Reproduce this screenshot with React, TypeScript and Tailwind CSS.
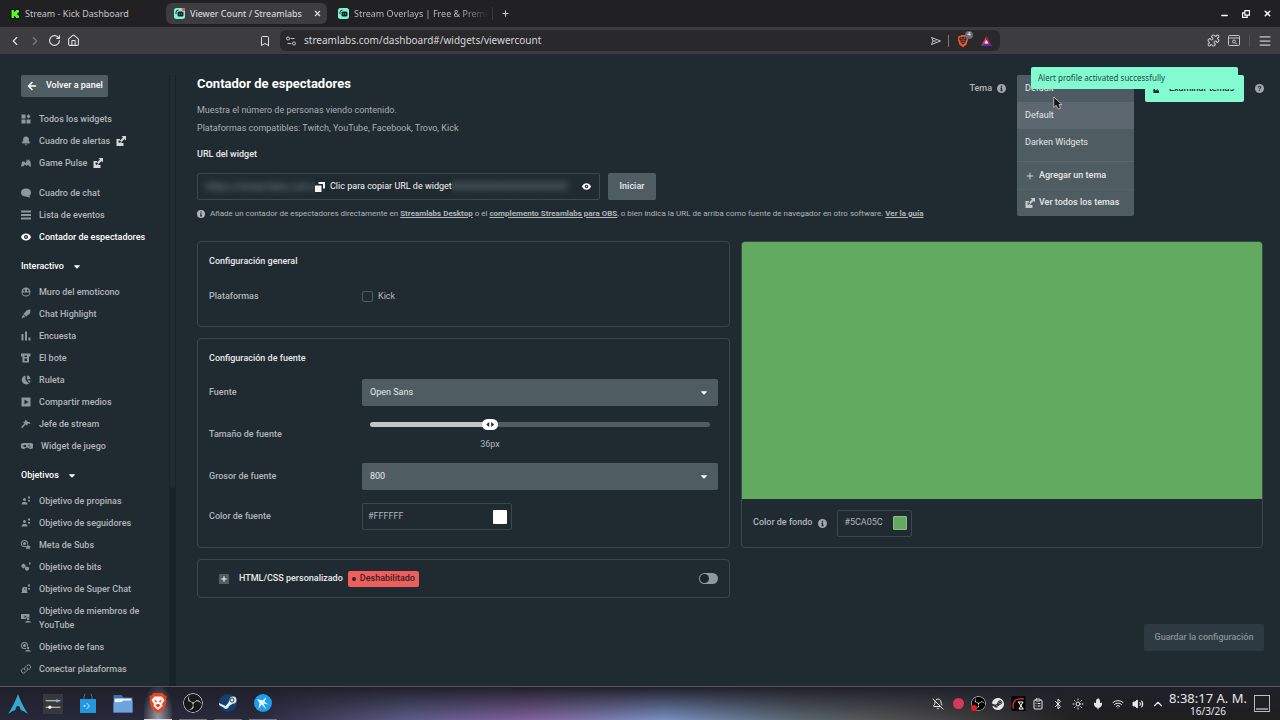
import type { ReactNode } from 'react';
import { useState } from 'react';
import { SiBrave, SiObsstudio, SiSteam } from 'react-icons/si';
import {
    ArrowLeft,
    Bell,
    BellOff,
    Bluetooth,
    Bookmark,
    ChevronLeft,
    ChevronRight,
    ChevronUp,
    ClipboardList,
    House,
    Menu,
    Mic,
    Minus,
    Plus,
    Puzzle,
    RotateCw,
    Sun,
    Volume2,
    Wifi,
    X,
} from 'lucide-react';

const MIN_SIZE = 8;
const MAX_SIZE = 89;

type IconProps = { className?: string };
type NavItem = { label: string; icon: ReactNode; external?: boolean; active?: boolean };

function Glyph({ children, className = 'size-[10px]' }: { children: ReactNode; className?: string }) {
    return (
        <svg viewBox="0 0 20 20" fill="currentColor" className={`shrink-0 ${className}`} aria-hidden="true">
            {children}
        </svg>
    );
}

function ExternalIcon({ className }: IconProps) {
    return (
        <Glyph className={className}>
            <path d="M1 6h7v3H5v3l2 2 4-3v3h4v6H1z" />
            <path d="M11 0h9v9l-3-3-6 6-3-3 6-6z" />
        </Glyph>
    );
}

function InfoIcon({ className }: IconProps) {
    return (
        <Glyph className={className}>
            <path fillRule="evenodd" d="M10 0a10 10 0 100 20 10 10 0 000-20zM8.500 4h3v3h-3zM7.500 8.500h4V14h1v2h-5v-2h1v-3.500h-1z" />
        </Glyph>
    );
}

function EyeIcon({ className }: IconProps) {
    return (
        <Glyph className={className}>
            <path fillRule="evenodd" d="M10 3C5 3 1.500 6 0 10c1.500 4 5 7 10 7s8.500-3 10-7c-1.500-4-5-7-10-7zm0 3a4 4 0 110 8 4 4 0 010-8z" />
            <circle cx="10" cy="10" r="1.500" />
        </Glyph>
    );
}

function Caret() {
    return (
        <svg viewBox="0 0 10 6" className="h-1 w-[6px] fill-current" aria-hidden="true">
            <path d="M1 0h8l1 1-5 5-5-5z" />
        </svg>
    );
}

function StreamlabsLogo({ live }: { live?: boolean }) {
    return (
        <svg viewBox="0 0 22 22" className="size-[11px] shrink-0" aria-hidden="true">
            <rect width="22" height="22" rx="5" fill="#80f5d2" />
            <path d="M4 12V9a5 5 0 015-5" fill="none" stroke="#122" strokeWidth="2" />
            <rect x="7" y="7" width="12" height="10" rx="3" fill="#122" />
            <path d="M11 11v2M15 11v2" stroke="#80f5d2" strokeWidth="1.500" />
            {live && <circle cx="19" cy="3" r="3.500" fill="#f0506e" />}
        </svg>
    );
}

const people = (
    <>
        <path d="M14 1h4v4h-4zM14 8h4v3h-4z" />
        <circle cx="7" cy="7" r="3" />
        <path d="M1 17c0-4 3-5 6-5s6 1 6 5z" />
    </>
);

const rosette = (
    <path fillRule="evenodd" d="M7 0a7 7 0 100 14h3v-2H7a5 5 0 115-5v2h2V7a7 7 0 00-7-7zm0 4a3 3 0 100 6 3 3 0 000-6z" />
);

const mainItems: NavItem[] = [
    {
        label: 'Todos los widgets',
        icon: <Glyph><path d="M1 1h8v8H1zM1 11h8v8H1zM11 11h8v8h-8zM15 0l4 5-4 4-4-4z" /></Glyph>,
    },
    { label: 'Cuadro de alertas', icon: <Bell className="size-[10px] shrink-0 fill-current" />, external: true },
    {
        label: 'Game Pulse',
        icon: <Glyph><path d="M0 17L2 7h5l2 3 2-3V3h2v3l4-4v4l2 1 1 10h-3l-3-4-3 3-3-3-4 4z" /></Glyph>,
        external: true,
    },
];

const chatItems: NavItem[] = [
    { label: 'Cuadro de chat', icon: <Glyph><path d="M10 1C4 1 0 4 0 9s4 8 10 8c2 0 4 2 8 2l-1-4c2-1 3-3 3-6 0-5-4-8-10-8z" /></Glyph> },
    { label: 'Lista de eventos', icon: <Glyph><path d="M0 1h20v4H0zM0 8h20v4H0zM0 15h20v4H0z" /></Glyph> },
    { label: 'Contador de espectadores', icon: <EyeIcon className="size-[10px]" />, active: true },
];

const interactiveItems: NavItem[] = [
    {
        label: 'Muro del emoticono',
        icon: (
            <Glyph>
                <path fillRule="evenodd" d="M10 1a9 9 0 100 18 9 9 0 000-18zM5 5h3v4H5zm7 0h3v4h-3zm-9 6h14c0 4-3 6-7 6s-7-2-7-6z" />
            </Glyph>
        ),
    },
    { label: 'Chat Highlight', icon: <Glyph><path d="M19 1l-1 8-8 6-5-5 7-8zM4 11l5 5-3 1-5 2 2-5z" /></Glyph> },
    { label: 'Encuesta', icon: <Glyph><path d="M1 6h4v13H1zM8 1h4v18H8zM15 13h4v6h-4z" /></Glyph> },
    {
        label: 'El bote',
        icon: <Glyph><path fillRule="evenodd" d="M0 1h19v6h-3v12H3V7H0zm7 4v3h5V5zm0 6v5h5v-5z" /></Glyph>,
    },
    { label: 'Ruleta', icon: <Glyph><path d="M9 1v9l7 7A9 9 0 119 1zM12 1a8 8 0 017 7l-7 1zM13 11h6a9 9 0 01-2 5z" /></Glyph> },
    { label: 'Compartir medios', icon: <Glyph><path fillRule="evenodd" d="M1 1h18v18H1zm6 4v10l8-5z" /></Glyph> },
    { label: 'Jefe de stream', icon: <Glyph><path d="M9 1l5 5 3 0 2 4-5-1-2 4-3-2-6 7-3-2 7-7-3-3 4-1z" /></Glyph> },
    {
        label: 'Widget de juego',
        icon: (
            <Glyph className="h-[10px] w-3">
                <path fillRule="evenodd" d="M3 4h14a6 6 0 010 12c-3 0-4-3-7-3s-4 3-7 3A6 6 0 013 4zm0 4v4h5V8zm10-1v3h2V7zm2 4v2h2v-2z" />
            </Glyph>
        ),
    },
];

const goalItems: NavItem[] = [
    { label: 'Objetivo de propinas', icon: <Glyph>{people}</Glyph> },
    { label: 'Objetivo de seguidores', icon: <Glyph>{people}</Glyph> },
    { label: 'Meta de Subs', icon: <Glyph>{rosette}<path d="M14 9l2 3 4 1-3 2 1 4-4-2-4 2 1-4-2-2 3-1z" /></Glyph> },
    { label: 'Objetivo de bits', icon: <Glyph><path d="M5 3l4 3v4l-4 3-4-3V6zM12 9l4 2v4l-4 3-4-3v-4zM16 1h3v4h-3z" /></Glyph> },
    { label: 'Objetivo de Super Chat', icon: <Glyph><path d="M14 1h4v4h-4zM14 8h4v3h-4zM4 6h8v10h1v2H1v-2h1v-6zM6 9v2h3V9z" fillRule="evenodd" /></Glyph> },
    {
        label: 'Objetivo de miembros de YouTube',
        icon: <Glyph><path d="M0 2h17v7h-3a3 3 0 00-4 3H0zM7 5v5l4-3z" fillRule="evenodd" /><circle cx="14" cy="12" r="2.500" /><path d="M8 19c0-4 12-4 12 0z" /></Glyph>,
    },
    { label: 'Objetivo de fans', icon: <Glyph>{rosette}<circle cx="14" cy="12" r="2.500" /><path d="M8 19c0-4 12-4 12 0z" /></Glyph> },
    {
        label: 'Conectar plataformas',
        icon: (
            <Glyph>
                <g fill="none" stroke="currentColor" strokeWidth="2">
                    <path d="M8 13a4 4 0 010-6l4-4a4 4 0 016 6l-3 3" />
                    <path d="M12 7a4 4 0 010 6l-4 4a4 4 0 01-6-6l3-3" />
                </g>
            </Glyph>
        ),
    },
];

function NavList({ items }: { items: NavItem[] }) {
    return (
        <ul>
            {items.map((item) => (
                <li key={item.label}>
                    <a
                        href="#"
                        className={`flex min-h-[22px] items-center gap-2 py-1 leading-[14px] ${item.active ? 'text-white' : 'text-[#b0b6ba]'}`}
                    >
                        <span className={`flex ${item.active ? 'text-white' : 'text-[#8d969c]'}`}>{item.icon}</span>
                        <span className="max-w-[112px]">{item.label}</span>
                        {item.external && <ExternalIcon className="-ml-[2px] size-[10px] text-[#d3d7d9]" />}
                    </a>
                </li>
            ))}
        </ul>
    );
}

function NavHeading({ children }: { children: ReactNode }) {
    return (
        <button className="mt-2 mb-[3px] flex h-[22px] items-center gap-[10px] text-white">
            {children}
            <Caret />
        </button>
    );
}

function BrowserChrome() {
    return (
        <header className="shrink-0 font-['Noto_Sans'] text-[9px] text-[#c5c5c8]">
            <div className="flex h-[27px] items-center bg-[#212124] pr-2">
                <div className="flex w-[166px] items-center gap-[5px] pl-[10px]">
                    <svg viewBox="0 0 20 20" className="size-[10px] shrink-0" aria-hidden="true">
                        <rect width="20" height="20" rx="2" fill="#0b0e0f" />
                        <path d="M3 2h5v4h2V4h2V2h6v5h-2v2h-2v2h2v2h2v5h-6v-2h-2v-2H8v4H3z" fill="#53fc18" />
                    </svg>
                    Stream - Kick Dashboard
                </div>
                <div className="flex h-[21px] w-[161px] items-center gap-[5px] rounded-md bg-[#3d3d40] pr-[5px] pl-2 text-[#e2e2e4]">
                    <StreamlabsLogo live />
                    <span className="flex-1 whitespace-nowrap">Viewer Count / Streamlabs</span>
                    <button aria-label="Cerrar pestaña">
                        <X className="size-[9px]" strokeWidth={3} />
                    </button>
                </div>
                <div className="flex w-[166px] items-center gap-[5px] border-r border-[#38383b] pr-2 pl-[11px]">
                    <StreamlabsLogo />
                    <span className="bg-gradient-to-r from-[#c5c5c8] from-80% to-[#c5c5c8]/10 bg-clip-text whitespace-nowrap text-transparent">
                        Stream Overlays | Free &amp; Premi
                    </span>
                </div>
                <button className="ml-2" aria-label="Nueva pestaña">
                    <Plus className="size-[9px]" strokeWidth={3} />
                </button>
                <div className="ml-auto flex items-center gap-[13px] text-white">
                    <button aria-label="Minimizar"><Minus className="mt-1 size-[9px]" strokeWidth={4} /></button>
                    <button aria-label="Restaurar">
                        <svg viewBox="0 0 14 14" className="size-2" fill="none" stroke="currentColor" strokeWidth="2" aria-hidden="true">
                            <path d="M5 1h8v8H5zM5 5H1v8h8V9" />
                        </svg>
                    </button>
                    <button aria-label="Cerrar"><X className="size-[9px]" strokeWidth={4} /></button>
                </div>
            </div>
            <div className="flex h-[27px] items-center bg-[#3d3d40]">
                <div className="flex w-[21.875%] items-center gap-[6px] pr-[9px] pl-2 text-[#e2e2e4]">
                    <button aria-label="Atrás"><ChevronLeft className="size-[14px]" /></button>
                    <button aria-label="Adelante" className="text-[#7c7c80]"><ChevronRight className="size-[14px]" /></button>
                    <button aria-label="Recargar"><RotateCw className="size-[13px]" /></button>
                    <button aria-label="Inicio"><House className="size-[13px]" /></button>
                    <button className="ml-auto" aria-label="Marcador"><Bookmark className="size-3" /></button>
                </div>
                <div className="flex h-[21px] flex-1 items-center gap-2 rounded-md bg-[#29292c] px-[6px]">
                    <svg viewBox="0 0 20 20" className="size-[10px]" fill="none" stroke="currentColor" strokeWidth="2" aria-hidden="true">
                        <circle cx="4" cy="5" r="3" />
                        <circle cx="16" cy="15" r="3" />
                        <path d="M9 5h8M3 15h8" />
                    </svg>
                    <input
                        aria-label="Dirección"
                        className="min-w-0 flex-1 text-[10px] text-[#d6d6d9] outline-none"
                        defaultValue="streamlabs.com/dashboard#/widgets/viewercount"
                    />
                    <svg viewBox="0 0 20 20" className="-mr-px size-[10px]" fill="none" stroke="currentColor" strokeWidth="2" aria-hidden="true">
                        <path d="M1 3l18 7-18 7 3-7zM4 10h7" />
                    </svg>
                    <span className="h-3 w-px bg-[#77777a]" />
                    <span className="relative mr-1">
                        <SiBrave className="size-3 text-[#f0592b]" />
                        <span className="absolute -top-1 -right-1 flex size-2 items-center justify-center rounded-full bg-[#6b6b76] text-[6px] text-white">4</span>
                    </span>
                    <svg viewBox="0 0 22 20" className="mr-[2px] h-[10px] w-[11px]" aria-hidden="true">
                        <path d="M11 0L0 20h11z" fill="#f0442e" />
                        <path d="M11 0l11 20H11z" fill="#9e1f63" />
                        <path d="M0 20l6-5h10l6 5z" fill="#5a2bb8" />
                        <path d="M11 8l4 7H7z" fill="#fff" />
                    </svg>
                </div>
                <div className="flex w-[21.875%] items-center justify-end gap-2 pr-2">
                    <button aria-label="Extensiones"><Puzzle className="size-[13px]" /></button>
                    <button aria-label="Buscar pestañas">
                        <svg viewBox="0 0 24 22" className="h-[11px] w-3" fill="none" stroke="currentColor" strokeWidth="2" aria-hidden="true">
                            <rect x="1" y="1" width="22" height="20" rx="2" />
                            <path d="M1 6h22M15 16l3 3" />
                            <circle cx="12" cy="13" r="3" />
                        </svg>
                    </button>
                    <span className="ml-px h-3 w-px bg-[#555558]" />
                    <button aria-label="Menú" className="text-[#a0a0a3]"><Menu className="size-[14px]" strokeWidth={3} /></button>
                </div>
            </div>
        </header>
    );
}

function Sidebar() {
    return (
        <nav className="flex w-44 shrink-0 pt-[21px]">
            <div className="min-w-0 flex-1 pl-[21px] font-medium">
                <button className="mb-[11px] flex h-[22px] items-center gap-2 rounded-xs bg-[#4f5d63] px-[5px] text-white">
                    <ArrowLeft className="size-3" strokeWidth={3} />
                    Volver a panel
                </button>
                <NavList items={mainItems} />
                <div className="mt-2">
                    <NavList items={chatItems} />
                </div>
                <NavHeading>Interactivo</NavHeading>
                <NavList items={interactiveItems} />
                <NavHeading>Objetivos</NavHeading>
                <NavList items={goalItems} />
            </div>
            <div className="w-[7px] bg-[#19222a] px-px">
                <div className="h-[413px] rounded-full bg-[#212b33]" />
            </div>
        </nav>
    );
}

function ThemePicker() {
    return (
        <div className="flex items-center">
            <label htmlFor="theme" className="font-medium">Tema</label>
            <InfoIcon className="ml-[5px] size-[9px] text-[#a0a8ad]" />
            <div className="relative ml-[11px]">
                <select id="theme" className="h-[27px] w-[117px] appearance-none rounded-t-xs bg-[#4f5b62] px-2 text-[#e8eaeb]">
                    <option>Default</option>
                    <option>Darken Widgets</option>
                </select>
                <div className="absolute top-full left-0 w-full rounded-b-xs bg-[#4f5d63] text-[#e3e6e7]">
                    <button className="block h-[27px] w-full bg-[#5c676f] px-2 text-left">Default</button>
                    <button className="block h-[27px] w-full px-2 text-left">Darken Widgets</button>
                    <div className="mt-[5px] border-t border-[#5c676c]">
                        <button className="flex h-[27px] w-full items-center gap-1 px-2 font-medium whitespace-nowrap">
                            <Plus className="size-[10px]" /> Agregar un tema
                        </button>
                        <button className="flex h-[27px] w-full items-center gap-1 border-t border-[#566469] px-2 font-medium whitespace-nowrap">
                            <ExternalIcon className="size-[10px] text-[#c3c9cb]" /> Ver todos los temas
                        </button>
                    </div>
                </div>
                <svg viewBox="0 0 12 18" className="pointer-events-none absolute top-[21px] left-[36px] z-20 h-[14px] w-[9px]" aria-hidden="true">
                    <path d="M1 1v14l3-3 3 5 3-1-2-5h4z" fill="#17171a" stroke="#d8d8d8" />
                </svg>
            </div>
            <div className="relative ml-[11px]">
                <button className="flex h-[27px] w-[99px] items-center gap-2 rounded-xs bg-[#83fbd1] px-2 font-medium whitespace-nowrap text-[#17242d]">
                    <ExternalIcon className="size-2" /> Examinar temas
                </button>
                <div role="status" className="absolute right-[6px] bottom-[13px] z-10 h-[22px] w-[207px] rounded-xs bg-[#83fbd1] pl-[7px] font-['Noto_Sans'] text-[8px] leading-[21px] text-[#1d4a46]">
                    Alert profile activated successfully
                </div>
            </div>
            <button className="ml-[11px] flex size-[9px] items-center justify-center rounded-full bg-[#a0a8ad] text-[8px] font-bold text-[#202a31]" aria-label="Ayuda">?</button>
        </div>
    );
}

function SelectRow({ id, label, options }: { id: string; label: string; options: string[] }) {
    return (
        <div className="flex h-[27px] items-center">
            <label htmlFor={id} className="w-[153px] font-medium">{label}</label>
            <div className="relative flex-1">
                <select id={id} className="h-[27px] w-full appearance-none rounded-xs bg-[#4f5d63] px-2 text-[#e8eaeb]">
                    {options.map((option) => (
                        <option key={option}>{option}</option>
                    ))}
                </select>
                <span className="pointer-events-none absolute top-3 right-[11px] text-white">
                    <Caret />
                </span>
            </div>
        </div>
    );
}

function SettingsForm() {
    const [size, setSize] = useState(36);
    const ratio = (size - MIN_SIZE) / (MAX_SIZE - MIN_SIZE);
    const thumb = `calc(8px + ${ratio} * (100% - 16px))`;

    return (
        <div className="flex flex-col gap-[11px]">
            <section className="h-[86px] rounded border border-[#3d474e] px-[11px] pt-3">
                <h2 className="leading-[14px] font-medium text-[#e8eaeb]">Configuración general</h2>
                <div className="mt-[21px] flex items-center leading-[14px]">
                    <span className="w-[153px] font-medium">Plataformas</span>
                    <label className="flex items-center gap-[5px]">
                        <input type="checkbox" className="size-[11px] appearance-none rounded-xs border border-[#4f5b62]" />
                        Kick
                    </label>
                </div>
            </section>

            <section className="rounded border border-[#3d474e] px-[11px] pt-3 pb-[17px]">
                <h2 className="mb-[14px] leading-[14px] font-medium text-[#e8eaeb]">Configuración de fuente</h2>
                <SelectRow id="font" label="Fuente" options={['Open Sans', 'Roboto', 'Lato']} />
                <div className="my-3 flex h-[33px] items-center">
                    <label htmlFor="size" className="w-[153px] font-medium">Tamaño de fuente</label>
                    <div className="relative mx-2 h-full flex-1">
                        <input
                            id="size"
                            type="range"
                            min={MIN_SIZE}
                            max={MAX_SIZE}
                            value={size}
                            onChange={(e) => setSize(Number(e.target.value))}
                            style={{ backgroundImage: `linear-gradient(to right, #c3c3c9 ${thumb}, #4f5d63 ${thumb})` }}
                            className="mt-1 block h-[5px] w-full appearance-none rounded-full [&::-webkit-slider-thumb]:h-[11px] [&::-webkit-slider-thumb]:w-4 [&::-webkit-slider-thumb]:appearance-none [&::-webkit-slider-thumb]:rounded-full [&::-webkit-slider-thumb]:bg-white"
                        />
                        <div
                            className="pointer-events-none absolute top-1 flex -translate-x-1/2 flex-col items-center gap-[10px] leading-[14px]"
                            style={{ left: thumb }}
                        >
                            <svg viewBox="0 0 16 10" className="h-[5px] w-2 fill-[#202a31]" aria-hidden="true">
                                <path d="M6 0v10L0 5zM10 0v10l6-5z" />
                            </svg>
                            {size}px
                        </div>
                    </div>
                </div>
                <SelectRow id="weight" label="Grosor de fuente" options={['800', '400', '600']} />
                <div className="mt-[13px] flex h-[27px] items-center">
                    <label htmlFor="color" className="w-[153px] font-medium">Color de fuente</label>
                    <div className="flex h-[27px] w-[150px] items-center rounded-xs border border-[#3d474e] pr-1 pl-[5px]">
                        <input id="color" defaultValue="#FFFFFF" className="min-w-0 flex-1 outline-none" />
                        <span className="size-[14px] rounded-[1px] bg-white" />
                    </div>
                </div>
            </section>

            <section className="flex h-[39px] items-center rounded border border-[#3d474e] pr-[11px] pl-[21px]">
                <button className="flex size-[10px] items-center justify-center bg-[#4f5d63] text-white" aria-label="Expandir">
                    <Plus className="size-2" strokeWidth={3} />
                </button>
                <h2 className="ml-[10px] font-medium text-[#e8eaeb]">HTML/CSS personalizado</h2>
                <span className="ml-[5px] flex h-4 items-center gap-1 rounded-xs bg-[#ee5e5c] px-1 font-medium text-[#3b2024]">
                    <span className="size-1 rounded-full bg-[#3b2024]" />
                    Deshabilitado
                </span>
                <input
                    type="checkbox"
                    role="switch"
                    aria-label="HTML/CSS personalizado"
                    className="ml-auto flex h-[11px] w-[19px] appearance-none items-center rounded-full bg-[#8f989d] px-px before:size-[9px] before:rounded-full before:bg-[#17242d]"
                />
            </section>
        </div>
    );
}

function Preview() {
    return (
        <section className="self-start overflow-hidden rounded border border-[#3d474e]">
            <div className="h-[257px] bg-[#62aa60]" />
            <div className="flex h-12 items-center px-[11px]">
                <label htmlFor="background" className="font-medium">Color de fondo</label>
                <InfoIcon className="ml-[6px] size-[9px] text-[#a0a8ad]" />
                <div className="ml-[10px] flex h-[27px] w-[75px] items-center rounded-xs border border-[#3d474e] pr-1 pl-[6px]">
                    <input id="background" defaultValue="#5CA05C" className="min-w-0 flex-1 outline-none" />
                    <span className="size-[14px] rounded-[1px] border border-[#8fb591] bg-[#62aa60]" />
                </div>
            </div>
        </section>
    );
}

function Dashboard() {
    return (
        <main className="flex min-w-0 flex-1 flex-col pr-4 pl-[21px]">
            <div className="flex items-start justify-between pt-[21px]">
                <h1 className="text-[13px] leading-[18px] font-bold text-white">Contador de espectadores</h1>
                <ThemePicker />
            </div>
            <div className="-mt-px leading-[18px] text-[#a9b0b5]">
                <p>Muestra el número de personas viendo contenido.</p>
                <p>Plataformas compatibles: Twitch, YouTube, Facebook, Trovo, Kick</p>
            </div>
            <h2 className="mt-[10px] leading-[14px] font-medium text-[#e8eaeb]">URL del widget</h2>
            <div className="mt-3 flex gap-2">
                <div className="relative flex h-[27px] w-[403px] items-center rounded-xs border border-[#3d474e]">
                    <input
                        aria-label="URL del widget"
                        readOnly
                        defaultValue="https://streamlabs.com/widgets/viewer-count/v1/000000000000000000000000000000"
                        className="mx-2 w-[362px] text-[10px] text-[#7b868e] blur-[3px] outline-none"
                    />
                    <button className="absolute inset-y-0 left-[117px] flex items-center gap-[5px] bg-[#202a31] text-[#f3f4f5]">
                        <Glyph><path d="M7 0h13v13h-4V4H7z" /><path d="M0 7h13v13H0z" /></Glyph>
                        Clic para copiar URL de widget
                    </button>
                    <button className="mr-2 ml-auto text-white" aria-label="Mostrar URL">
                        <EyeIcon className="size-[9px]" />
                    </button>
                </div>
                <button className="h-[27px] w-12 rounded-xs bg-[#4f5d63] font-medium text-[#e8eaeb]">Iniciar</button>
            </div>
            <p className="mt-2 flex items-center gap-[5px] text-[8px] leading-3">
                <InfoIcon className="size-2" />
                <span>
                    Añade un contador de espectadores directamente en <a href="#" className="font-bold underline">Streamlabs Desktop</a> o el{' '}
                    <a href="#" className="font-bold underline">complemento Streamlabs para OBS</a>, o bien indica la URL de arriba como fuente de
                    navegador en otro software. <a href="#" className="font-bold underline">Ver la guía</a>
                </span>
            </p>
            <div className="mt-[21px] mr-px grid grid-cols-[533fr_522fr] gap-[11px]">
                <SettingsForm />
                <Preview />
            </div>
            <button disabled className="mt-[26px] h-[27px] w-[120px] self-end rounded-xs bg-[#2e3a41] font-medium text-[#879096]">
                Guardar la configuración
            </button>
        </main>
    );
}

function TaskSlot({ children, open }: { children: ReactNode; open?: boolean }) {
    return (
        <button className="flex w-[35px] justify-center">
            <span className={`flex h-[33px] w-7 items-center justify-center ${open ? 'border-b border-[#77777d]' : ''}`}>{children}</span>
        </button>
    );
}

function TraySlot({ children }: { children: ReactNode }) {
    return <span className="flex w-5 justify-center">{children}</span>;
}

function Taskbar() {
    return (
        <footer className="flex h-[34px] shrink-0 items-center border-t border-[#55555d] bg-[linear-gradient(to_bottom,#20202a,transparent),linear-gradient(to_right,#262838,#2a2a3e_20%,#5c5c88_32%,#80609a_41%,#7890c0_52%,#5a6870_62%,#505050_70%,#1e1e1f_85%)] pr-[10px] text-[#e6e6e6]">
            <div className="flex items-center">
                <TaskSlot>
                    <svg viewBox="0 0 40 40" className="size-5" aria-hidden="true">
                        <path d="M20 0C16 12 8 28 0 40c7-5 11-7 15-8 0-5 2-8 5-8s5 3 5 8c4 1 8 3 15 8C32 28 24 12 20 0z" fill="#36a9cf" />
                    </svg>
                </TaskSlot>
                <TaskSlot>
                    <svg viewBox="0 0 38 38" className="size-5" aria-hidden="true">
                        <rect width="38" height="38" fill="#36383c" />
                        <path d="M5 13h28M5 25h28" stroke="#ddd" strokeWidth="2" />
                        <circle cx="27" cy="13" r="3" fill="#6cb6ef" />
                        <circle cx="13" cy="25" r="3" fill="#fff" />
                    </svg>
                </TaskSlot>
                <TaskSlot>
                    <svg viewBox="0 0 36 40" className="h-5 w-[18px]" aria-hidden="true">
                        <path d="M10 12V6a8 8 0 0116 0v6" fill="none" stroke="#38718f" strokeWidth="2" />
                        <path d="M2 10h32v28H2z" fill="#2496e0" />
                        <path d="M15 18l6 6-6 6" fill="none" stroke="#c9efff" strokeWidth="2" />
                        <circle cx="11" cy="24" r="2" fill="#c9efff" />
                    </svg>
                </TaskSlot>
                <TaskSlot>
                    <svg viewBox="0 0 40 36" className="h-[18px] w-5" aria-hidden="true">
                        <path d="M1 0h16l4 5h18v30H1z" fill="#3a72b2" />
                        <path d="M3 7h34v8H3z" fill="#eff4fa" />
                        <path d="M1 15h14l6-4h18v24H1z" fill="#6ea4de" />
                    </svg>
                </TaskSlot>
                <button className="flex w-[35px] justify-center">
                    <span className="flex h-[33px] w-7 items-center justify-center border-b border-[#dedede] bg-[radial-gradient(ellipse_at_bottom,#9a9aa2,transparent_80%)]">
                        <svg viewBox="0 0 36 40" className="h-5 w-[18px]" aria-hidden="true">
                            <path d="M9 0h18l4 5 4 1-1 7 1 4-5 15-12 8-12-8L1 17l1-4-1-7 4-1z" fill="#ee4321" />
                            <path d="M11 7h14l6 7-5 8 1 4-9 8-9-8 1-4-5-8z" fill="#fff" />
                            <path d="M10 13l6 3-2 4zM26 13l-6 3 2 4zM16 22h4l3 3-5 4-5-4z" fill="#ee4321" />
                        </svg>
                    </span>
                </button>
                <TaskSlot open>
                    <SiObsstudio className="size-5 rounded-full bg-[#17171a] text-[#c9c9cc]" />
                </TaskSlot>
                <TaskSlot open>
                    <svg viewBox="0 0 36 36" className="size-[18px]" aria-hidden="true">
                        <circle cx="18" cy="18" r="18" fill="#14406f" />
                        <path d="M0 18l13 6 6-7 2-6a7 7 0 117 8l-8 5a6 6 0 01-11 3L0 22z" fill="#e4ecf3" />
                        <circle cx="26" cy="12" r="4" fill="#e4ecf3" stroke="#14406f" strokeWidth="2" />
                    </svg>
                </TaskSlot>
                <TaskSlot open>
                    <svg viewBox="0 0 36 36" className="size-[18px]" aria-hidden="true">
                        <circle cx="18" cy="18" r="18" fill="#209cec" />
                        <path d="M6 10l11 3 8-7-4 9 7 6-9-2 6 12-10-10-6 9 2-12z" fill="#e5f5ff" />
                    </svg>
                </TaskSlot>
            </div>
            <div className="ml-auto flex items-center">
                <TraySlot><BellOff className="size-3" /></TraySlot>
                <TraySlot><span className="size-[11px] rounded-full bg-[#d8385f]" /></TraySlot>
                <TraySlot>
                    <span className="relative">
                        <SiObsstudio className="size-[15px] rounded-full bg-black text-[#dcdcdc]" />
                        <span className="absolute bottom-0 left-0 size-[6px] rounded-full bg-[#ea1d25]" />
                    </span>
                </TraySlot>
                <TraySlot><SiSteam className="size-3" /></TraySlot>
                <TraySlot>
                    <svg viewBox="0 0 28 30" className="size-[15px]" aria-hidden="true">
                        <rect width="28" height="30" fill="#060606" />
                        <path d="M4 25C0 10 10 3 25 6" fill="none" stroke="#c22b3a" strokeWidth="3" />
                        <path d="M13 12h10l-8 14h9M14 12l9 14" fill="none" stroke="#fff" strokeWidth="2" />
                    </svg>
                </TraySlot>
                <TraySlot><ClipboardList className="size-3" /></TraySlot>
                <TraySlot><Bluetooth className="size-3" /></TraySlot>
                <TraySlot><Sun className="size-3" /></TraySlot>
                <TraySlot><Mic className="size-3 fill-current" /></TraySlot>
                <TraySlot><Wifi className="size-3" /></TraySlot>
                <TraySlot><Volume2 className="size-3 fill-current" /></TraySlot>
                <TraySlot><ChevronUp className="size-[14px]" /></TraySlot>
                <div className="w-20 text-center font-['Noto_Sans'] whitespace-nowrap">
                    <div className="text-[13px] leading-[14px]">8:38:17 A. M.</div>
                    <div className="text-[10px] leading-[12px]">16/3/26</div>
                </div>
                <button aria-label="Mostrar escritorio" className="ml-[6px] flex h-[17px] w-4 items-end border border-[#bdbdbd] p-px">
                    <span className="h-[2px] w-full bg-[#8b8b8b]" />
                </button>
            </div>
        </footer>
    );
}

export default function App() {
    return (
        <div className="flex h-screen flex-col overflow-hidden bg-[#202a31] font-['Roboto',sans-serif] text-[9px] text-[#b0b6ba]">
            <BrowserChrome />
            <div className="flex min-h-0 flex-1">
                <Sidebar />
                <Dashboard />
            </div>
            <Taskbar />
        </div>
    );
}
